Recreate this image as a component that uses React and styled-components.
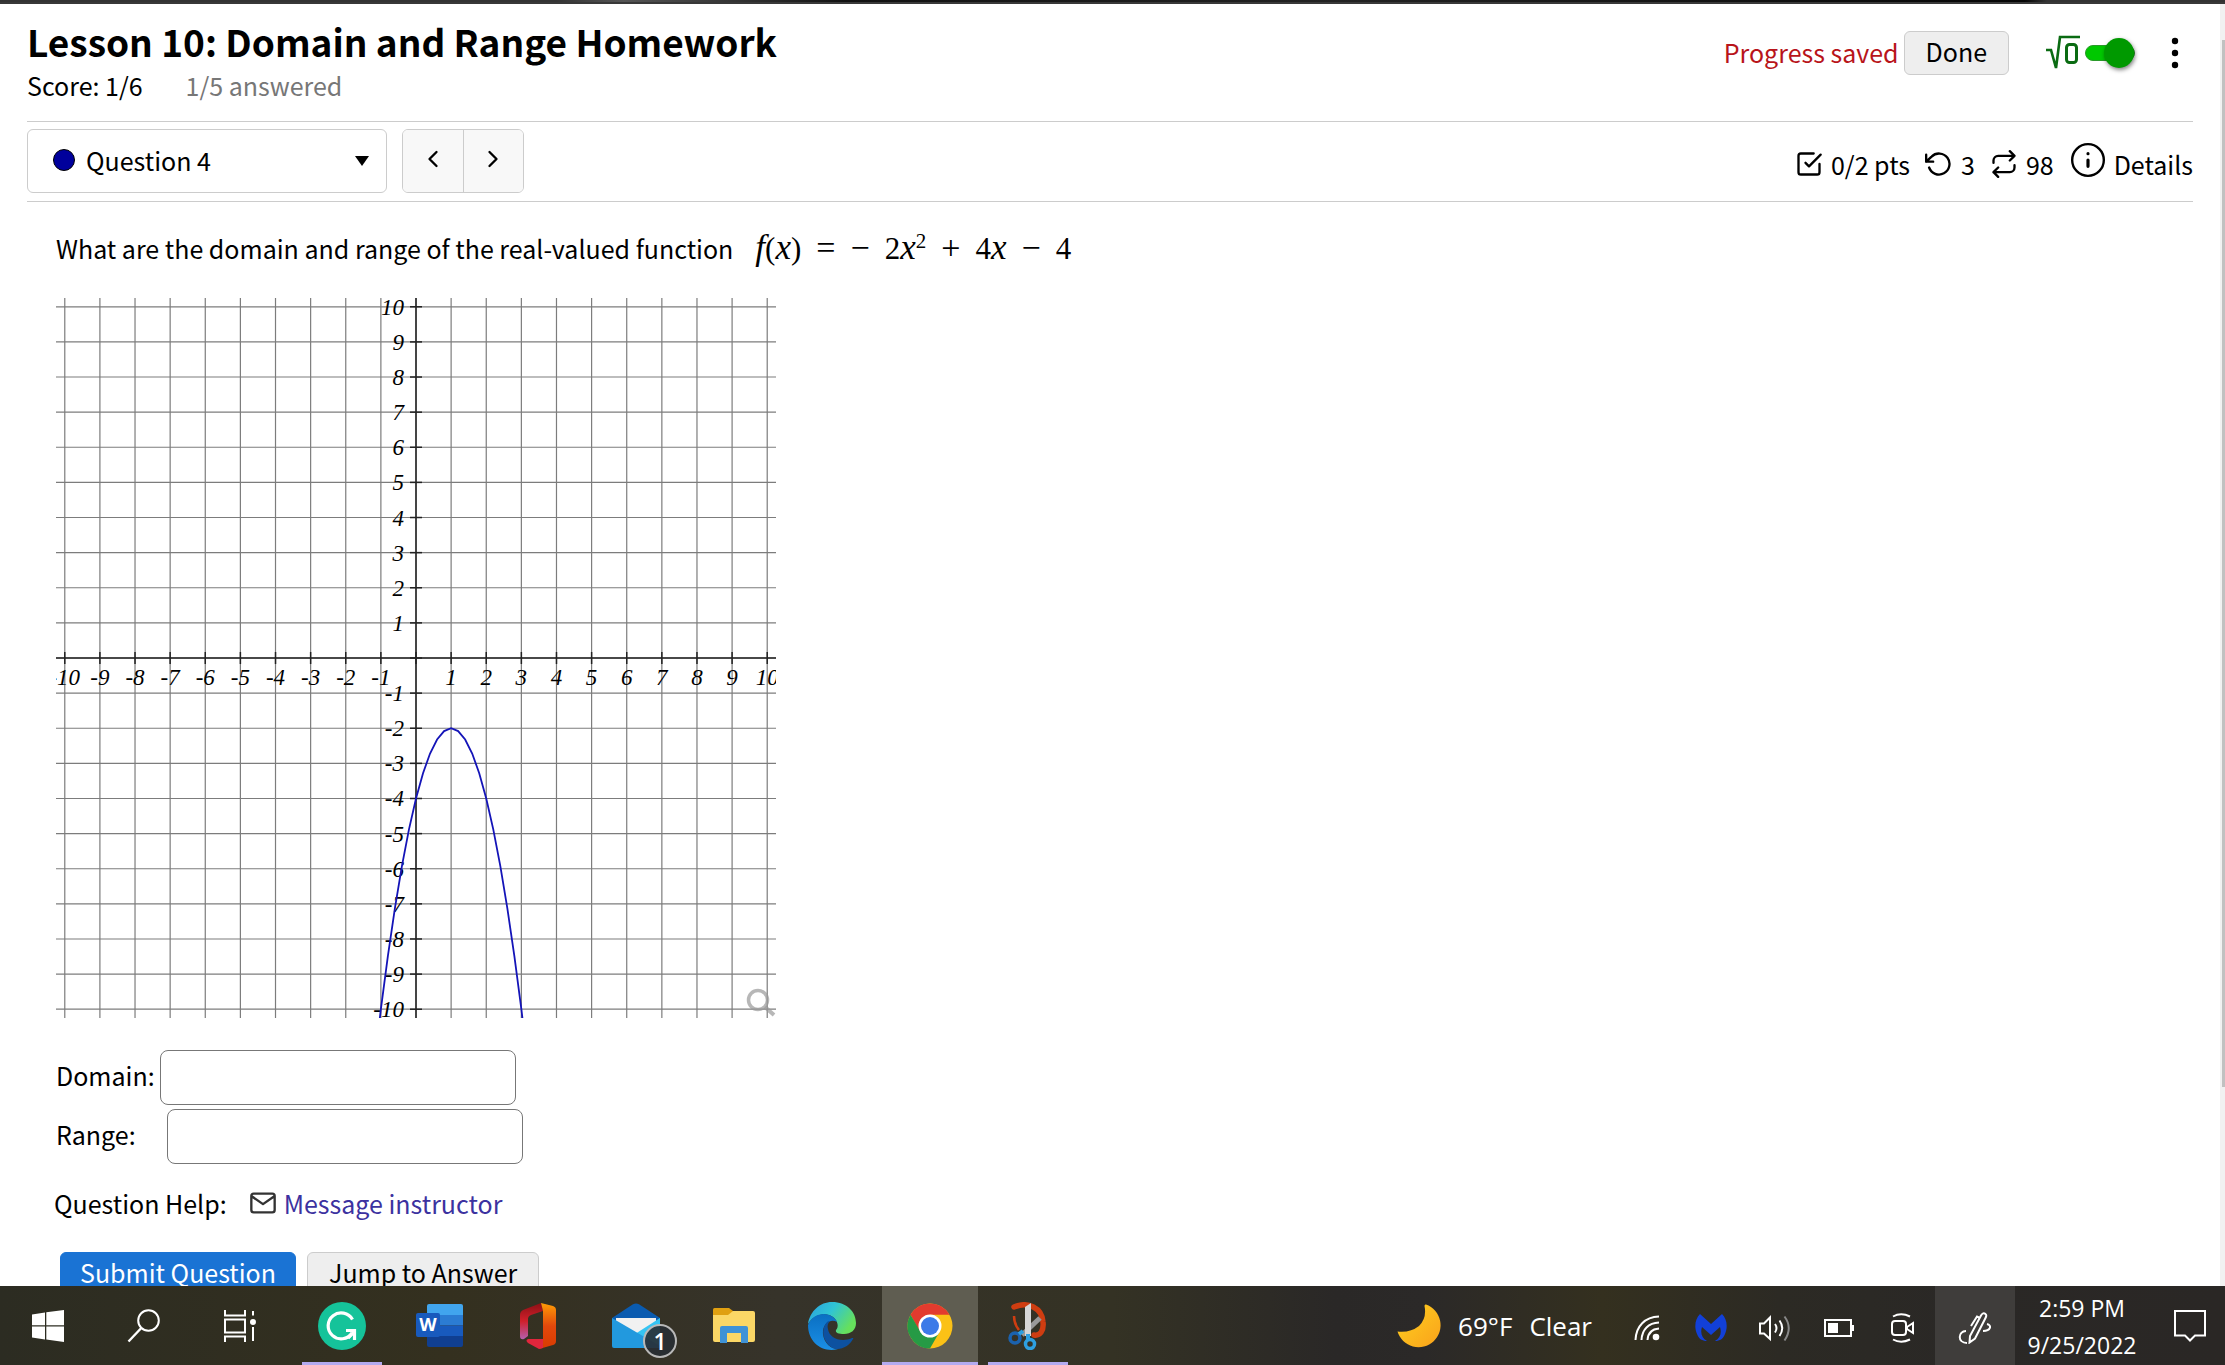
import React from 'react';
import styled, { createGlobalStyle } from 'styled-components';

const GlobalStyle = createGlobalStyle`
  * {
    box-sizing: border-box;
  }
  body {
    margin: 0;
    color: #000;
    background: #fff;
    font-family: 'Noto Sans CJK SC', 'Open Sans', sans-serif;
    font-size: 25px;
    line-height: 32px;
  }
  button, input, select {
    font: inherit;
    color: inherit;
  }
`;

const Line = ({ size = 28, children, ...rest }) => (
  <svg
    width={size}
    height={size}
    viewBox="0 0 24 24"
    fill="none"
    stroke="currentColor"
    strokeWidth="2"
    strokeLinecap="round"
    strokeLinejoin="round"
    aria-hidden="true"
    {...rest}
  >
    {children}
  </svg>
);

/* ---------- graph ---------- */

const SIZE = 720;
const MID = SIZE / 2;
const UNIT = SIZE / 20.5;
const px = x => MID + x * UNIT;
const py = y => MID - y * UNIT;
const ticks = Array.from({ length: 21 }, (_, i) => i - 10);
const curve = Array.from({ length: 24 }, (_, i) => -1.2 + i * 0.2)
  .map(x => `${px(x)},${py(-2 * x * x + 4 * x - 4)}`)
  .join(' ');

const Graph = () => (
  <Plot viewBox={`0 0 ${SIZE} ${SIZE}`} role="img" aria-label="Graph of the function">
    <g stroke="#7c7c7c" strokeWidth="1.2">
      {ticks.map(t => (
        <React.Fragment key={t}>
          <line x1={px(t)} y1="0" x2={px(t)} y2={SIZE} />
          <line x1="0" y1={py(t)} x2={SIZE} y2={py(t)} />
        </React.Fragment>
      ))}
    </g>
    <g stroke="#222" strokeWidth="1.5">
      <line x1={MID} y1="0" x2={MID} y2={SIZE} />
      <line x1="0" y1={MID} x2={SIZE} y2={MID} />
      {ticks.map(t => (
        <React.Fragment key={t}>
          <line x1={px(t)} y1={MID - 6} x2={px(t)} y2={MID + 6} />
          <line x1={MID - 6} y1={py(t)} x2={MID + 6} y2={py(t)} />
        </React.Fragment>
      ))}
    </g>
    {ticks.filter(t => t !== 0).map(t => (
      <React.Fragment key={t}>
        <text x={px(t)} y={MID + 27} textAnchor="middle">{t}</text>
        <text x={MID - 12} y={py(t) + 8} textAnchor="end">{t}</text>
      </React.Fragment>
    ))}
    <polyline points={curve} fill="none" stroke="#1414b8" strokeWidth="1.8" />
    <g fill="none" stroke="#999" strokeOpacity="0.7" strokeWidth="3.5">
      <circle cx="702" cy="702" r="9.5" />
      <line x1="709" y1="709" x2="718" y2="717" strokeWidth="4" />
    </g>
  </Plot>
);

/* ---------- taskbar icons ---------- */

const WindowsIcon = () => (
  <svg width="32" height="32" viewBox="0 0 32 32" fill="#fff" aria-hidden="true">
    <path d="M0 4.4 13 2.5V15.3H0zM14.3 2.3 32 0V15.3H14.3zM0 16.5H13V29.4L0 27.5zM14.3 16.5H32V32L14.3 29.6z" />
  </svg>
);

const SearchIcon = () => (
  <svg width="34" height="34" viewBox="0 0 34 34" fill="none" stroke="#fff" strokeWidth="2" aria-hidden="true">
    <circle cx="21.5" cy="11.5" r="10.3" />
    <path d="M14.3 19 1.5 32.5" strokeWidth="2.4" />
  </svg>
);

const TaskViewIcon = () => (
  <svg width="32" height="32" viewBox="0 0 32 32" fill="none" stroke="#fff" strokeWidth="2" aria-hidden="true">
    <path d="M1 0V5.5H21V0M1 32V26.5H21V32M1 9.5H21V22.5H1zM29 1V5.5M29 17V31" />
    <circle cx="29" cy="12" r="3" fill="#fff" stroke="none" />
  </svg>
);

const GrammarlyIcon = () => (
  <svg width="48" height="48" viewBox="0 0 48 48" fill="none" aria-hidden="true">
    <circle cx="24" cy="24" r="24" fill="#15c39a" />
    <path d="M34.500 17.500A13 13 0 1 0 34 31" stroke="#fff" strokeWidth="3.200" />
    <path d="M28 28.500H36.500V38" stroke="#fff" strokeWidth="3.200" />
    <path d="M30 36 37 29" stroke="#fff" strokeWidth="3.200" />
  </svg>
);

const WordIcon = () => (
  <svg width="48" height="44" viewBox="0 0 48 44" aria-hidden="true">
    <path d="M13 0H45a2 2 0 0 1 2 2V11H11V2a2 2 0 0 1 2-2z" fill="#41a5ee" />
    <path d="M11 11H47V21.5H11z" fill="#2b7cd3" />
    <path d="M11 21.5H47V32H11z" fill="#185abd" />
    <path d="M11 32H47V41a2 2 0 0 1-2 2H13a2 2 0 0 1-2-2z" fill="#103f91" />
    <rect x="0" y="9" width="24" height="24" rx="2" fill="#185abd" />
    <text x="12" y="27" textAnchor="middle" fill="#fff" fontFamily="Open Sans, sans-serif" fontWeight="700" fontSize="18">W</text>
  </svg>
);

const OfficeIcon = () => (
  <svg width="38" height="46" viewBox="0 0 38 46" aria-hidden="true">
    <defs>
      <linearGradient id="officeSide" x1="0" y1="0" x2="0" y2="1">
        <stop offset="0" stopColor="#8c1015" />
        <stop offset="0.5" stopColor="#d1202b" />
        <stop offset="1" stopColor="#b55fae" />
      </linearGradient>
      <linearGradient id="officeFront" x1="0" y1="0" x2="0" y2="1">
        <stop offset="0" stopColor="#ff9c06" />
        <stop offset="0.5" stopColor="#e3480c" />
        <stop offset="1" stopColor="#d83b01" />
      </linearGradient>
    </defs>
    <path d="M22 0 4 7Q1 8.500 1 12V33Q1 37 5 36L9 33V16Q9 13 12 12L24 8z" fill="url(#officeSide)" />
    <path d="M22 0 34 3Q37 4 37 7V38Q37 41 34 42L20 46 24 39V8z" fill="url(#officeFront)" />
    <path d="M9 36H24V45L20 46 9 40Q6 37 9 36z" fill="#e0263c" />
  </svg>
);

const MailIcon = () => (
  <svg width="48" height="46" viewBox="0 0 48 46" aria-hidden="true">
    <path d="M0 15 21 1.300Q24-.5 27 1.300L48 15V28H0z" fill="#0a5bb0" />
    <path d="M4 15H44V30L24 34 4 26z" fill="#f1f1f1" />
    <path d="M48 15 20 33 46 45Q48 45 48 43z" fill="#35c5f4" />
    <path d="M0 15 48 43V45H2Q0 45 0 43z" fill="#2299de" />
  </svg>
);

const FolderIcon = () => (
  <svg width="42" height="36" viewBox="0 0 42 36" aria-hidden="true">
    <path d="M0 1.500Q0 0 1.500 0H16L20 3V9H0z" fill="#e0a011" />
    <path d="M0 7H15L20 3H40Q42 3 42 5V32Q42 34 40 34H2Q0 34 0 32z" fill="#fbd766" />
    <path d="M7 35V20Q7 18 9 18H33Q35 18 35 20V35H28V25H14V35z" fill="#3f92d6" />
  </svg>
);

const EdgeIcon = () => (
  <svg width="48" height="48" viewBox="0 0 48 48" aria-hidden="true">
    <defs>
      <linearGradient id="edgeTop" x1="0" y1="0" x2="1" y2="0.5">
        <stop offset="0" stopColor="#2a9fe0" />
        <stop offset="0.5" stopColor="#30c4d4" />
        <stop offset="1" stopColor="#66e05c" />
      </linearGradient>
      <linearGradient id="edgeBody" x1="0" y1="0" x2="0" y2="1">
        <stop offset="0" stopColor="#0a6fc2" />
        <stop offset="1" stopColor="#1b8fe6" />
      </linearGradient>
    </defs>
    <path d="M0 22C2 9 12 0 24 0 39 0 48 10 48 21 48 28 43 32 36 32 31 32 27 31 28 28 31 25 30 19 25 15 17 9 5 13 0 22z" fill="url(#edgeTop)" />
    <path d="M0 23C4 12 17 9 25 15 28 17 29 20 29 20 22 16 14 23 15 32 16 41 23 47 30 47 15 51 0 41 0 23z" fill="url(#edgeBody)" />
    <path d="M19 20C13 27 14 38 23 45 30 50 41 45 45 37 46 36 45 36 44 36 33 41 21 36 20 27 19 24 20 21 22 19 21 19 20 19 19 20z" fill="#0d51a0" />
  </svg>
);

const ChromeIcon = () => (
  <svg width="46" height="46" viewBox="0 0 46 46" aria-hidden="true">
    <circle cx="23" cy="23" r="22.500" fill="#fbc116" />
    <path d="M3.500 11.700A22.500 22.500 0 0 1 42.500 11.700H23L13 29z" fill="#e33b2e" />
    <path d="M3.500 11.700A22.500 22.500 0 0 0 23 45.500L32.700 28.600 13.300 28.600z" fill="#269a45" />
    <circle cx="23" cy="23" r="11.500" fill="#fff" />
    <circle cx="23" cy="23" r="9" fill="#3c7ae8" />
  </svg>
);

const SnipIcon = () => (
  <svg width="40" height="48" viewBox="0 0 40 48" fill="none" aria-hidden="true">
    <path d="M6 5C20-1 34 6 35 20 36 29 32 34 26 33" stroke="#cf3d11" strokeWidth="5.500" strokeLinecap="round" />
    <path d="M6 14Q6 22 11 28" stroke="#cf3d11" strokeWidth="2.500" />
    <path d="M32 16 14 33" stroke="#9a9a9a" strokeWidth="5" />
    <path d="M17 5 23 1V34H17z" fill="#d6d6d6" />
    <circle cx="7" cy="36" r="5" stroke="#1b62ae" strokeWidth="3.500" />
    <circle cx="22" cy="42" r="4.500" stroke="#2e9fe0" strokeWidth="3.500" />
    <path d="M11 32 15 29M20 37V32" stroke="#2e9fe0" strokeWidth="4" />
  </svg>
);

const MoonIcon = () => (
  <svg width="44" height="44" viewBox="0 0 44 44" aria-hidden="true">
    <defs>
      <linearGradient id="moon" x1="0" y1="0" x2="1" y2="1">
        <stop offset="0" stopColor="#ffd21f" />
        <stop offset="1" stopColor="#f9a11b" />
      </linearGradient>
    </defs>
    <path d="M29 .5A22 22 0 1 1 .5 27.500Q13 29 22 22 30 14 27.500 2Q27.500 0 29 .5z" fill="url(#moon)" />
  </svg>
);

const WifiIcon = () => (
  <svg width="26" height="26" viewBox="0 0 26 26" fill="none" stroke="#fff" strokeWidth="2" aria-hidden="true">
    <path d="M1.500 25C2 11 11 2 25 1.500M7.500 25C8 14.500 14.500 8 25 7.500M13.500 25C14 18 18 14 25 13.500" />
    <circle cx="22" cy="22" r="3.300" fill="#fff" stroke="none" />
  </svg>
);

const MalwareIcon = () => (
  <svg width="32" height="28" viewBox="0 0 32 28" fill="#1240d8" aria-hidden="true">
    <path d="M5 0 16 10 27 0C32 5 33 13 30 20 28 25 25 27 20 27 25 24 27 19 25 13L16 21 7 13C5 19 7 24 12 27 7 27 4 25 2 20-1 13 0 5 5 0z" />
  </svg>
);

const SoundIcon = () => (
  <svg width="34" height="28" viewBox="0 0 34 28" fill="none" stroke="#fff" strokeWidth="2" aria-hidden="true">
    <path d="M2 9.500H6L12 3.500V25L6 19.500H2zM17 10Q20 14 17 18.500M21.500 6.500Q27 14 21.500 22" />
    <path d="M26.500 2.500Q35 14 26.500 26.500" stroke="#888" />
  </svg>
);

const BatteryIcon = () => (
  <svg width="30" height="20" viewBox="0 0 30 20" aria-hidden="true">
    <path d="M1 2H27V18H1z" fill="none" stroke="#fff" strokeWidth="2" />
    <path d="M4 5H14V15H4zM28 7H30V13H28z" fill="#fff" />
  </svg>
);

const MeetIcon = () => (
  <svg width="24" height="30" viewBox="0 0 24 30" fill="none" stroke="#fff" strokeWidth="2" aria-hidden="true">
    <rect x="1" y="8" width="14" height="14" rx="3" />
    <path d="M16 14 22 10V20L16 16zM2 3.500Q10-1 19 3.500M2 26.500Q10 31 19 26.500" />
  </svg>
);

const PenIcon = () => (
  <svg width="34" height="32" viewBox="0 0 34 32" fill="none" stroke="#fff" strokeWidth="2" aria-hidden="true">
    <path d="M11.500 30.500 12 24 23 3.500Q25 0 27.500 2 29 3 27.500 6L17 26.500zM13 14 19 4.500 22 6M8 19C0 19-1 31 9 31M29 12C34 13 33 19 25 19" />
  </svg>
);

const ChatIcon = () => (
  <svg width="32" height="32" viewBox="0 0 32 32" fill="none" stroke="#fff" strokeWidth="2" aria-hidden="true">
    <path d="M1 1H31V25.500H21L16 30.500 11 25.500H1z" />
  </svg>
);

/* ---------- page ---------- */

const apps = [
  { label: 'Grammarly', Icon: GrammarlyIcon, open: true },
  { label: 'Word', Icon: WordIcon },
  { label: 'Office', Icon: OfficeIcon },
  { label: 'Mail', Icon: MailIcon, count: 1 },
  { label: 'File Explorer', Icon: FolderIcon },
  { label: 'Edge', Icon: EdgeIcon },
  { label: 'Chrome', Icon: ChromeIcon, open: true, active: true },
  { label: 'Snipping Tool', Icon: SnipIcon, open: true },
];

const tray = [
  { label: 'Network', Icon: WifiIcon },
  { label: 'Malwarebytes', Icon: MalwareIcon },
  { label: 'Volume', Icon: SoundIcon },
  { label: 'Battery', Icon: BatteryIcon },
  { label: 'Meet Now', Icon: MeetIcon },
];

const Header = () => (
  <HeaderRow>
    <div>
      <Title>Lesson 10: Domain and Range Homework</Title>
      <Score>
        <span>Score: 1/6</span>
        <Muted>1/5 answered</Muted>
      </Score>
    </div>
    <HeaderTools>
      <Saved>Progress saved</Saved>
      <PlainButton type="button">Done</PlainButton>
      <MathToggle>
        <svg width="36" height="36" viewBox="0 0 36 36" fill="none" stroke="#0a6b12" strokeWidth="3" role="img" aria-label="Equation editor">
          <path d="M1 15H6L11 33 15 2H35" strokeWidth="2.600" />
          <rect x="21.500" y="9.500" width="10" height="18" rx="3" />
        </svg>
        <Switch type="checkbox" aria-label="Toggle equation editor" defaultChecked />
      </MathToggle>
      <MoreButton type="button" aria-label="More options">
        <svg width="8" height="32" viewBox="0 0 8 32" aria-hidden="true">
          <circle cx="4" cy="4" r="3.200" />
          <circle cx="4" cy="16" r="3.200" />
          <circle cx="4" cy="28" r="3.200" />
        </svg>
      </MoreButton>
    </HeaderTools>
  </HeaderRow>
);

const QuestionBar = () => (
  <BarRow>
    <SelectWrap>
      <Dot />
      <QuestionSelect aria-label="Question" defaultValue="4">
        <option value="4">Question 4</option>
      </QuestionSelect>
      <Caret viewBox="0 0 14 10" aria-hidden="true">
        <path d="M0 0H14L7 10z" />
      </Caret>
    </SelectWrap>
    <Pager>
      <PageButton type="button" aria-label="Previous question">
        <Line><path d="M15 18 9 12 15 6" /></Line>
      </PageButton>
      <PageButton type="button" aria-label="Next question">
        <Line><path d="M9 18 15 12 9 6" /></Line>
      </PageButton>
    </Pager>
    <Stats>
      <Stat>
        <Line><path d="M9 11 12 14 22 4M21 12v7a2 2 0 0 1-2 2H5a2 2 0 0 1-2-2V5a2 2 0 0 1 2-2h11" /></Line>
        0/2 pts
      </Stat>
      <Stat>
        <Line><path d="M1 4V10H7M3.510 15a9 9 0 1 0 2.130-9.360L1 10" /></Line>
        3
      </Stat>
      <Stat>
        <Line><path d="M17 1 21 5 17 9M3 11V9a4 4 0 0 1 4-4h14M7 23 3 19 7 15M21 13v2a4 4 0 0 1-4 4H3" /></Line>
        98
      </Stat>
      <DetailsButton type="button">
        <Line size={38}>
          <circle cx="12" cy="12" r="10" strokeWidth="1.500" />
          <path d="M12 16V12M12 8H12.010" />
        </Line>
        Details
      </DetailsButton>
    </Stats>
  </BarRow>
);

const Question = () => (
  <QuestionBody>
    <Prompt>
      What are the domain and range of the real-valued function
      <Formula>
        <span><i>f</i>(<i>x</i>)</span>
        <Operator>=</Operator>
        <Operator>−</Operator>
        <span>2<i>x</i><sup>2</sup></span>
        <Operator>+</Operator>
        <span>4<i>x</i></span>
        <Operator>−</Operator>
        <span>4</span>
      </Formula>
    </Prompt>
    <Graph />
    <Answers>
      <Field $labelWidth="104px">
        <label htmlFor="domain">Domain:</label>
        <TextBox id="domain" type="text" />
      </Field>
      <Field $labelWidth="111px">
        <label htmlFor="range">Range:</label>
        <TextBox id="range" type="text" />
      </Field>
    </Answers>
    <Help>
      Question Help:
      <HelpLink href="#message">
        <Line stroke="#333">
          <path d="M4 4h16a2 2 0 0 1 2 2v12a2 2 0 0 1-2 2H4a2 2 0 0 1-2-2V6a2 2 0 0 1 2-2zM22 6 12 13 2 6" />
        </Line>
        Message instructor
      </HelpLink>
    </Help>
    <Actions>
      <PrimaryButton type="button" $pad="19px">Submit Question</PrimaryButton>
      <PlainButton type="button" $pad="21px">Jump to Answer</PlainButton>
    </Actions>
  </QuestionBody>
);

const Taskbar = () => (
  <Bar>
    <BarGroup>
      <TaskButton type="button" aria-label="Start"><WindowsIcon /></TaskButton>
      <TaskButton type="button" aria-label="Search"><SearchIcon /></TaskButton>
      <TaskButton type="button" aria-label="Task View"><TaskViewIcon /></TaskButton>
    </BarGroup>
    <AppGroup>
      {apps.map(({ label, Icon, open, active, count }) => (
        <TaskButton key={label} type="button" aria-label={label} $open={open} $active={active}>
          <Icon />
          {count && <Badge>{count}</Badge>}
        </TaskButton>
      ))}
    </AppGroup>
    <Weather type="button">
      <MoonIcon />
      <span>69°F</span>
      <span>Clear</span>
    </Weather>
    <BarGroup>
      {tray.map(({ label, Icon }) => (
        <TrayButton key={label} type="button" aria-label={label}><Icon /></TrayButton>
      ))}
      <PenButton type="button" aria-label="Windows Ink"><PenIcon /></PenButton>
      <Clock type="button">
        <span>2:59 PM</span>
        <span>9/25/2022</span>
      </Clock>
      <ChatButton type="button" aria-label="Notifications"><ChatIcon /></ChatButton>
    </BarGroup>
  </Bar>
);

const App = () => (
  <Screen>
    <GlobalStyle />
    <TopEdge />
    <Viewport>
      <Page>
        <Header />
        <QuestionBar />
        <Question />
      </Page>
      <ScrollTrack>
        <ScrollThumb />
      </ScrollTrack>
    </Viewport>
    <Taskbar />
  </Screen>
);

export default App;

const Screen = styled.div`
  display: flex;
  flex-direction: column;
  height: 100vh;
`;

const TopEdge = styled.div`
  flex: none;
  height: 4px;
  background: linear-gradient(90deg, #333 0 25%, #555 28%, #111 38%, #222 60%, #050505 91%, #333 92%);
  border-bottom: 2px solid #383838;
`;

const Viewport = styled.div`
  display: flex;
  flex: 1;
  min-height: 0;
  overflow: hidden;
`;

const Page = styled.main`
  flex: 1;
  padding: 0 27px;
`;

const ScrollTrack = styled.div`
  width: 5px;
  padding: 36px 0 0 2px;
  background: #f1f1f1;
`;

const ScrollThumb = styled.div`
  height: 84%;
  background: #c1c1c1;
`;

const HeaderRow = styled.header`
  display: flex;
  justify-content: space-between;
  align-items: flex-start;
  height: 118px;
  padding-top: 13px;
  border-bottom: 1px solid #ccc;
`;

const Title = styled.h1`
  margin: 0;
  font-size: 37px;
  line-height: 48px;
`;

const Score = styled.div`
  display: flex;
  gap: 43px;
  line-height: 40px;
`;

const Muted = styled.span`
  color: #777;
`;

const HeaderTools = styled.div`
  display: flex;
  align-items: center;
  padding: 14px 8px 0 0;
`;

const Saved = styled.span`
  margin-right: 5px;
  padding-bottom: 2px;
  color: #b8141a;
`;

const PlainButton = styled.button`
  height: 44px;
  padding: 0 ${props => props.$pad || '21px'} 4px;
  border: 1px solid #ccc;
  border-radius: 6px;
  background: #eee;
`;

const PrimaryButton = styled(PlainButton)`
  border-color: #1a73d4;
  background: #1a73d4;
  color: #fff;
`;

const MathToggle = styled.div`
  display: flex;
  align-items: center;
  gap: 4px;
  margin: 0 30px 0 36px;
`;

const Switch = styled.input`
  appearance: none;
  display: flex;
  align-items: center;
  justify-content: flex-end;
  width: 50px;
  height: 16px;
  margin: 0;
  border-radius: 8px;
  background: #00c800;
  border: 1px solid #2a9a2a;
  cursor: pointer;

  &::before {
    content: '';
    width: 30px;
    height: 30px;
    border-radius: 50%;
    background: #090;
    box-shadow: 1px 2px 4px rgba(0, 0, 0, 0.5);
  }
`;

const MoreButton = styled.button`
  display: flex;
  justify-content: center;
  width: 20px;
  padding: 0;
  border: 0;
  background: none;
`;

const BarRow = styled.div`
  display: flex;
  align-items: center;
  height: 80px;
  padding-bottom: 1px;
  border-bottom: 1px solid #ccc;
`;

const SelectWrap = styled.div`
  position: relative;
  width: 360px;
  margin-right: 15px;
`;

const QuestionSelect = styled.select`
  appearance: none;
  display: block;
  width: 100%;
  height: 64px;
  padding: 0 40px 2px 58px;
  border: 1px solid #ccc;
  border-radius: 6px;
  background: #fff;
`;

const Dot = styled.span`
  position: absolute;
  top: 20px;
  left: 26px;
  width: 22px;
  height: 22px;
  border: 1px solid #000;
  border-radius: 50%;
  background: #00009c;
`;

const Caret = styled.svg`
  position: absolute;
  top: 27px;
  right: 18px;
  width: 14px;
  height: 10px;
  pointer-events: none;
`;

const Pager = styled.div`
  display: flex;
  width: 122px;
  height: 64px;
  overflow: hidden;
  border: 1px solid #ccc;
  border-radius: 6px;
`;

const PageButton = styled.button`
  display: flex;
  flex: 1;
  align-items: center;
  justify-content: center;
  padding: 0 0 4px;
  border: 0;
  background: #f8f8f8;

  & + & {
    border-left: 1px solid #ccc;
  }
`;

const Stats = styled.div`
  display: flex;
  align-items: center;
  gap: 15px;
  margin-left: auto;
  padding-top: 6px;
`;

const Stat = styled.span`
  display: flex;
  align-items: center;
  gap: 8px;
`;

const DetailsButton = styled.button`
  display: flex;
  align-items: center;
  gap: 7px;
  padding: 0;
  border: 0;
  background: none;

  svg {
    margin: -8px 0 0;
  }
`;

const QuestionBody = styled.section`
  padding: 24px 29px;
`;

const Prompt = styled.p`
  display: flex;
  align-items: baseline;
  gap: 22px;
  margin: 0 0 27px;
  line-height: 44px;
`;

const Formula = styled.span`
  display: flex;
  align-items: baseline;
  gap: 15px;
  font-family: 'Liberation Serif', serif;
  font-size: 31px;

  i {
    font-size: 35px;
    line-height: 1px;
  }

  sup {
    font-size: 21px;
    line-height: 1px;
  }
`;

const Operator = styled.span`
  font-size: 34px;
  line-height: 1px;
`;

const Plot = styled.svg`
  display: block;
  width: 720px;
  height: 720px;

  text {
    font-family: 'Liberation Serif', serif;
    font-size: 23px;
    font-style: italic;
  }
`;

const Answers = styled.div`
  display: flex;
  flex-direction: column;
  gap: 4px;
  margin-top: 32px;
`;

const Field = styled.div`
  display: flex;
  align-items: center;

  label {
    width: ${props => props.$labelWidth};
    padding-bottom: 6px;
  }
`;

const TextBox = styled.input`
  width: 356px;
  height: 55px;
  padding: 0 12px;
  border: 1px solid #777;
  border-radius: 8px;
  background: #fff;
`;

const Help = styled.div`
  display: flex;
  align-items: center;
  gap: 22px;
  margin: 23px 0 0 -2px;
`;

const HelpLink = styled.a`
  display: flex;
  align-items: center;
  gap: 7px;
  color: #3c32a0;
  text-decoration: none;
`;

const Actions = styled.div`
  display: flex;
  gap: 11px;
  margin: 33px 0 0 4px;
`;

const Bar = styled.footer`
  display: flex;
  flex: none;
  align-items: stretch;
  height: 79px;
  background: linear-gradient(
    90deg,
    #2c2c22 0,
    #34301f 20%,
    #36332a 35%,
    #343224 50%,
    #2a2827 60%,
    #2b2928 64%,
    #34301f 72%,
    #2c2a24 80%,
    #2a2826 88%,
    #2a2725 100%
  );
  color: #fff;
  font-family: 'Open Sans', sans-serif;
  font-size: 26px;
`;

const BarGroup = styled.div`
  display: flex;
`;

const AppGroup = styled(BarGroup)`
  gap: 2px;
  margin-left: 6px;
`;

const TaskButton = styled.button`
  position: relative;
  display: flex;
  align-items: center;
  justify-content: center;
  width: 96px;
  padding: 0;
  border: 0;
  background: ${props => (props.$active ? '#5f5d51' : 'none')};

  &::after {
    content: '';
    display: ${props => (props.$open ? 'block' : 'none')};
    position: absolute;
    right: ${props => (props.$active ? '0' : '8px')};
    bottom: 0;
    left: ${props => (props.$active ? '0' : '8px')};
    height: 3px;
    background: #b3aaf0;
  }
`;

const Badge = styled.span`
  position: absolute;
  right: 7px;
  bottom: 7px;
  width: 34px;
  height: 34px;
  border: 2px solid #b8b8b8;
  border-radius: 50%;
  background: rgba(40, 46, 52, 0.9);
  color: #fff;
  font-size: 23px;
  font-weight: 600;
  line-height: 30px;
  text-align: center;
`;

const Weather = styled.button`
  display: flex;
  align-items: center;
  gap: 17px;
  margin-left: auto;
  padding: 0 23px 0 0;
  border: 0;
  background: none;
  color: #fff;
`;

const TrayButton = styled.button`
  display: flex;
  align-items: center;
  justify-content: center;
  width: 64px;
  padding: 4px 0 0;
  border: 0;
  background: none;
`;

const PenButton = styled(TrayButton)`
  width: 80px;
  background: #3f3d3b;
`;

const Clock = styled.button`
  display: flex;
  flex-direction: column;
  align-items: center;
  justify-content: center;
  width: 134px;
  padding: 2px 0 0;
  border: 0;
  background: none;
  color: #fff;
  font-size: 23px;
  line-height: 37px;
`;

const ChatButton = styled(TrayButton)`
  justify-content: flex-end;
  width: 76px;
  padding: 0 19px 0 0;
`;
